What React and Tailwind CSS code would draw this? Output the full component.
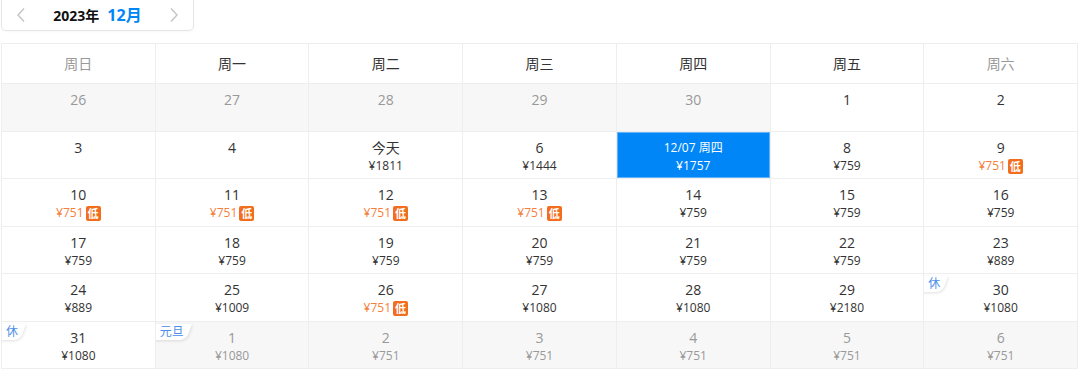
import React from "react";

const FONT = { fontFamily: '"Open Sans", "Noto Sans CJK SC", sans-serif' };

const weekdays = ["周日", "周一", "周二", "周三", "周四", "周五", "周六"];

const rows = [
  [
    { d: "26", other: true },
    { d: "27", other: true },
    { d: "28", other: true },
    { d: "29", other: true },
    { d: "30", other: true },
    { d: "1" },
    { d: "2" },
  ],
  [
    { d: "3" },
    { d: "4" },
    { d: "今天", p: "1811" },
    { d: "6", p: "1444" },
    { d: "12/07 周四", p: "1757", sel: true },
    { d: "8", p: "759" },
    { d: "9", p: "751", low: true },
  ],
  [
    { d: "10", p: "751", low: true },
    { d: "11", p: "751", low: true },
    { d: "12", p: "751", low: true },
    { d: "13", p: "751", low: true },
    { d: "14", p: "759" },
    { d: "15", p: "759" },
    { d: "16", p: "759" },
  ],
  [
    { d: "17", p: "759" },
    { d: "18", p: "759" },
    { d: "19", p: "759" },
    { d: "20", p: "759" },
    { d: "21", p: "759" },
    { d: "22", p: "759" },
    { d: "23", p: "889" },
  ],
  [
    { d: "24", p: "889" },
    { d: "25", p: "1009" },
    { d: "26", p: "751", low: true },
    { d: "27", p: "1080" },
    { d: "28", p: "1080" },
    { d: "29", p: "2180" },
    { d: "30", p: "1080", tag: "休" },
  ],
  [
    { d: "31", p: "1080", tag: "休" },
    { d: "1", p: "1080", other: true, tag: "元旦" },
    { d: "2", p: "751", other: true },
    { d: "3", p: "751", other: true },
    { d: "4", p: "751", other: true },
    { d: "5", p: "751", other: true },
    { d: "6", p: "751", other: true },
  ],
];

const rowHeights = ["h-[48px]", "h-[47px]", "h-[48px]", "h-[47px]", "h-[48px]", "h-[47px]"];

function Tag({ text }) {
  return (
    <span className="absolute left-0 top-[2px] z-10 h-[16px] pl-[4px] pr-[8px]">
      <span className="absolute inset-0 -left-[6px] bg-white -skew-x-[20deg] origin-top-left rounded-br-[6px] shadow-[1px_1px_3px_rgba(0,0,0,0.12)]" />
      <span className="relative block text-[12px] leading-[16px] text-[#4b8ee8]">{text}</span>
    </span>
  );
}

function Cell({ c, h, last }) {
  if (c.sel) {
    return (
      <div className={`${h} relative border-r border-b border-[#eeeeee] ${last ? "" : ""}`}>
        <div className="absolute inset-0 bg-[#0086f6] border border-[#62b3fa] flex flex-col items-center pt-[6px] text-white">
          <div className="text-[12px] leading-[18px]">{c.d}</div>
          <div className="text-[12px] leading-[18px]">¥{c.p}</div>
        </div>
      </div>
    );
  }
  const bg = c.other ? "bg-[#f7f7f7]" : "bg-white";
  const numColor = c.other ? "text-[#999999]" : "text-[#333333]";
  return (
    <div className={`${h} ${bg} relative overflow-hidden border-r border-b border-[#eeeeee] flex flex-col items-center pt-[7px]`}>
      {c.tag && <Tag text={c.tag} />}
      <div className={`text-[14px] leading-[18px] ${numColor}`}>{c.d}</div>
      {c.p && (
        <div className="flex items-center leading-[18px]">
          <span
            className={`text-[12px] ${
              c.low ? "text-[#f5803e]" : c.other ? "text-[#999999]" : "text-[#333333]"
            }`}
          >
            ¥{c.p}
          </span>
          {c.low && (
            <span className="ml-[2px] flex h-[15px] w-[15px] items-center justify-center rounded-[2px] bg-[#f26d1d] text-[11px] font-bold leading-none text-white">
              低
            </span>
          )}
        </div>
      )}
    </div>
  );
}

export default function App() {
  return (
    <div className="w-[1080px] h-[370px] bg-white overflow-hidden" style={FONT}>
      <div className="ml-px w-[193px] h-[32px] -mt-px border border-[#e6e6e6] rounded-b-[5px] flex items-center justify-between px-[12px] shadow-[0_1px_2px_rgba(0,0,0,0.03)]">
        <svg width="12" height="16" viewBox="0 0 12 16" className="ml-[1px]">
          <path d="M9 1.5 L3 8 L9 14.5" fill="none" stroke="#c4c4c4" strokeWidth="1.4" />
        </svg>
        <div className="flex items-baseline">
          <span className="text-[14px] font-bold text-[#111111]">2023年</span>
          <span className="ml-[8px] text-[16px] font-bold text-[#0086f6]">12月</span>
        </div>
        <svg width="12" height="16" viewBox="0 0 12 16" className="mr-[1px]">
          <path d="M3 1.5 L9 8 L3 14.5" fill="none" stroke="#c4c4c4" strokeWidth="1.4" />
        </svg>
      </div>

      <div className="mt-[12px] ml-px w-[1077px] border-l border-t border-[#eeeeee] grid grid-cols-7">
        {weekdays.map((w, i) => (
          <div
            key={w}
            className={`h-[40px] flex items-center justify-center border-r border-b border-[#eeeeee] text-[14px] ${
              i === 0 || i === 6 ? "text-[#999999]" : "text-[#333333]"
            }`}
          >
            {w}
          </div>
        ))}
        {rows.map((r, ri) =>
          r.map((c, ci) => <Cell key={`${ri}-${ci}`} c={c} h={rowHeights[ri]} last={ci === 6} />)
        )}
      </div>
    </div>
  );
}
